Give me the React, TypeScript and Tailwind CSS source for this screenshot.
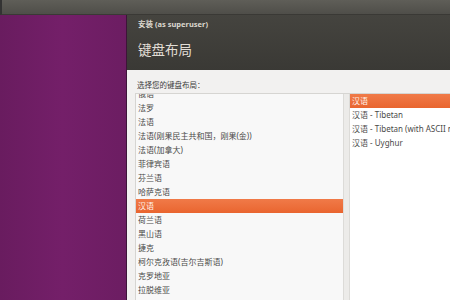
const LAYOUTS = [
  '俄语',
  '法罗',
  '法语',
  '法语(刚果民主共和国，刚果(金))',
  '法语(加拿大)',
  '菲律宾语',
  '芬兰语',
  '哈萨克语',
  '汉语',
  '荷兰语',
  '黑山语',
  '捷克',
  '柯尔克孜语(吉尔吉斯语)',
  '克罗地亚',
  '拉脱维亚',
];

const VARIANTS = ['汉语', '汉语 - Tibetan', '汉语 - Tibetan (with ASCII numerals)', '汉语 - Uyghur'];

const FONT = "font-['Noto_Sans','Noto_Sans_CJK_SC',sans-serif]";

function Row({ label, selected }: { label: string; selected: boolean }) {
  return (
    <div
      className={
        'h-[14px] leading-[14px] text-[8px] whitespace-nowrap pl-[2px] ' +
        (selected ? 'bg-gradient-to-b from-[#f07a48] to-[#e9652f] text-[#fff3ec]' : 'text-[#4a4a48]')
      }
    >
      {label}
    </div>
  );
}

export default function App() {
  return (
    <div className={`w-[450px] h-[300px] flex flex-col overflow-hidden bg-[#3c3b37] ${FONT}`}>
      {/* top panel */}
      <div className="h-[15px] shrink-0 bg-gradient-to-b from-[#5f5e58] to-[#4f4e49] border-b border-[#3a3935] border-l-2 border-l-[#333]" />

      <div className="flex-1 flex min-h-0">
        {/* desktop */}
        <div className="w-[127px] shrink-0 bg-gradient-to-r from-[#691c5f] via-[#741f69] to-[#6c1d62] border-r border-[#3d1438]" />

        {/* installer window */}
        <div className="flex-1 flex flex-col min-w-0">
          <div className="h-[55px] shrink-0 bg-gradient-to-b from-[#45443f] to-[#3a3935] pl-[11px]">
            <div className="h-[17px] pt-[4px] text-[7.5px] leading-[10px] font-bold text-[#dcd8cf]">安装 (as superuser)</div>
            <div className="mt-[9px] text-[13.5px] leading-[18px] text-[#e2ded6]">键盘布局</div>
          </div>

          <div className="flex-1 flex flex-col min-h-0 bg-[#f2f1f0] pl-[8px]">
            <div className="pt-[11px] h-[23px] text-[7.5px] leading-[9px] text-[#3c3c3c] pl-[2px]">选择您的键盘布局：</div>

            <div className="flex-1 flex min-h-0">
              <div className="w-[215px] shrink-0 flex border-l border-t border-[#d6d5d2] bg-[#f8f8f8]">
                <div className="flex-1 overflow-hidden">
                  <div className="-mt-[7px]">
                    {LAYOUTS.map((l) => (
                      <Row key={l} label={l} selected={l === '汉语'} />
                    ))}
                  </div>
                </div>
                <div className="w-[7px] bg-[#ecebe9] border-l border-r border-[#dcdbd8]" />
              </div>

              <div className="flex-1 min-w-0 overflow-hidden bg-white border-t border-[#d6d5d2]">
                {VARIANTS.map((v, i) => (
                  <Row key={v} label={v} selected={i === 0} />
                ))}
              </div>
            </div>
          </div>
        </div>
      </div>
    </div>
  );
}
